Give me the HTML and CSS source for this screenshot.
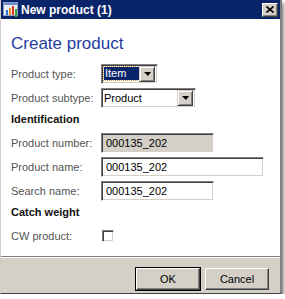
FILE: index.html
```html
<!DOCTYPE html>
<html lang="en">
<head>
    <meta charset="UTF-8">
    <title>New product (1)</title>
    <link rel="stylesheet" href="styles.css">
</head>
<body>
<div class="dialog">
    <div class="titlebar">
        <svg class="app-icon" width="15" height="15" viewBox="0 0 15 15">
            <rect x="0.5" y="0.5" width="14" height="13" fill="#e8eef8" stroke="#8aa0c8"/>
            <rect x="1" y="1" width="13" height="2" fill="#6a8cc8"/>
            <rect x="3" y="8" width="2" height="5" fill="#2f6fd0"/>
            <rect x="6" y="6" width="2" height="7" fill="#f08a18"/>
            <rect x="9" y="4" width="2" height="9" fill="#e03020"/>
            <rect x="12" y="7" width="2" height="8" fill="#3aa030"/>
        </svg>
        <span class="title">New product (1)</span>
        <div class="close-btn">
            <svg width="8" height="7" viewBox="0 0 8 7">
                <path d="M0.5 0.5 L7.5 6.5 M7.5 0.5 L0.5 6.5" stroke="#000" stroke-width="1.6"/>
            </svg>
        </div>
    </div>
    <div class="content">
        <h1>Create product</h1>
        <div class="row">
            <label>Product type:</label>
            <div class="select select-short">
                <span class="select-value"><span class="highlight">Item</span></span>
                <span class="drop-btn"><i></i></span>
            </div>
        </div>
        <div class="row">
            <label>Product subtype:</label>
            <div class="select select-wide">
                <span class="select-value">Product</span>
                <span class="drop-btn"><i></i></span>
            </div>
        </div>
        <div class="section">Identification</div>
        <div class="row">
            <label>Product number:</label>
            <div class="input input-mid readonly">000135_202</div>
        </div>
        <div class="row">
            <label>Product name:</label>
            <div class="input input-long">000135_202</div>
        </div>
        <div class="row">
            <label>Search name:</label>
            <div class="input input-mid">000135_202</div>
        </div>
        <div class="section">Catch weight</div>
        <div class="row">
            <label>CW product:</label>
            <span class="checkbox"></span>
        </div>
    </div>
    <div class="footer">
        <button class="btn btn-default">OK</button>
        <button class="btn">Cancel</button>
    </div>
</div>
</body>
</html>
```

FILE: styles.css
```css
* {
    box-sizing: border-box;
}

body {
    margin: 0;
    padding: 0;
    background-color: #ffffff;
    font-family: 'Liberation Sans', Arial, sans-serif;
    font-size: 11px;
}

.dialog {
    width: 282px;
    height: 294px;
    background-color: #ffffff;
    border-left: 1px solid #d4d0c8;
    border-right: 2px solid #808080;
    border-bottom: 1px solid #404040;
    box-shadow: 2px 3px 3px rgba(0, 0, 0, 0.45);
    display: flex;
    flex-direction: column;
}

.titlebar {
    height: 19px;
    background-color: #0a246a;
    display: flex;
    align-items: center;
    padding: 0 2px 0 2px;
}

.app-icon {
    flex: none;
}

.title {
    color: #ffffff;
    font-weight: bold;
    font-size: 12px;
    margin-left: 3px;
    flex: 1;
}

.close-btn {
    width: 16px;
    height: 14px;
    background-color: #d4d0c8;
    border-top: 1px solid #ffffff;
    border-left: 1px solid #ffffff;
    border-right: 1px solid #404040;
    border-bottom: 1px solid #404040;
    box-shadow: inset -1px -1px 0 #808080;
    display: flex;
    align-items: center;
    justify-content: center;
}

.content {
    flex: 1;
    padding: 14px 10px 0 10px;
    border-bottom: 1px solid #808080;
}

h1 {
    margin: 0 0 8px 0;
    font-size: 17px;
    line-height: 22px;
    font-weight: normal;
    color: #1f3c9e;
}

.row {
    display: flex;
    align-items: center;
    height: 21px;
    margin-bottom: 3px;
}

.row label {
    width: 90px;
    flex: none;
    color: #555555;
}

.section {
    font-weight: bold;
    color: #111111;
    height: 16px;
    line-height: 16px;
    margin: 1px 0 5px 0;
}

.select, .input {
    height: 20px;
    background-color: #ffffff;
    border-top: 1px solid #808080;
    border-left: 1px solid #808080;
    border-right: 1px solid #ffffff;
    border-bottom: 1px solid #ffffff;
    box-shadow: inset 1px 1px 0 #404040, inset -1px -1px 0 #d4d0c8;
    display: flex;
    align-items: center;
    color: #000000;
}

.select-short {
    width: 57px;
}

.select-wide {
    width: 95px;
}

.select-value {
    flex: 1;
    padding-left: 2px;
}

.highlight {
    display: inline-block;
    background-color: #0a246a;
    color: #ffffff;
    width: 35px;
    padding-left: 1px;
    outline: 1px dotted #c8a040;
    line-height: 13px;
}

.drop-btn {
    width: 16px;
    height: 16px;
    margin-right: 2px;
    background-color: #d4d0c8;
    border-top: 1px solid #d4d0c8;
    border-left: 1px solid #d4d0c8;
    border-right: 1px solid #404040;
    border-bottom: 1px solid #404040;
    box-shadow: inset 1px 1px 0 #ffffff, inset -1px -1px 0 #808080;
    display: flex;
    align-items: center;
    justify-content: center;
}

.drop-btn i {
    width: 0;
    height: 0;
    border-left: 4px solid transparent;
    border-right: 3px solid transparent;
    border-top: 4px solid #000000;
}

.input {
    padding-left: 4px;
}

.input-mid {
    width: 113px;
}

.input-long {
    width: 163px;
}

.readonly {
    background-color: #d4d0c8;
}

.checkbox {
    width: 12px;
    height: 12px;
    background-color: #ffffff;
    border-top: 1px solid #808080;
    border-left: 1px solid #808080;
    border-right: 1px solid #ffffff;
    border-bottom: 1px solid #ffffff;
    box-shadow: inset 1px 1px 0 #404040, inset -1px -1px 0 #d4d0c8;
    margin-left: 1px;
}

.footer {
    height: 36px;
    background-color: #d4d0c8;
    border-top: 1px solid #ffffff;
    display: flex;
    justify-content: flex-end;
    align-items: flex-start;
    gap: 5px;
    padding: 10px 11px 0 0;
}

.btn {
    width: 64px;
    height: 22px;
    font-family: 'Liberation Sans', Arial, sans-serif;
    font-size: 11px;
    color: #000000;
    background-color: #d4d0c8;
    border-top: 1px solid #ffffff;
    border-left: 1px solid #ffffff;
    border-right: 1px solid #404040;
    border-bottom: 1px solid #404040;
    box-shadow: inset -1px -1px 0 #808080;
    padding: 0;
}

.btn-default {
    outline: 1px solid #000000;
    width: 64px;
}
```
